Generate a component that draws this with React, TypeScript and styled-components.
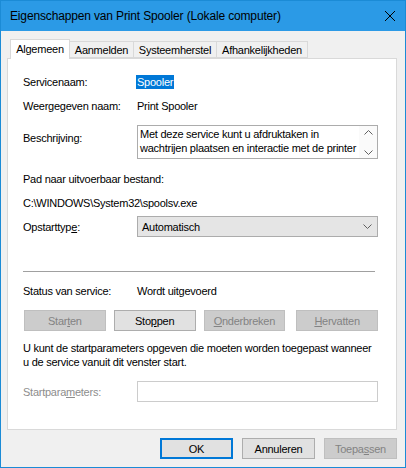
import React from "react";
import styled, { createGlobalStyle } from "styled-components";

const Global = createGlobalStyle`
  html, body { margin: 0; padding: 0; background: #f0f0f0; }
  body {
    font-family: "Liberation Sans", Arial, sans-serif;
    font-size: 11px;
    letter-spacing: -0.25px;
    color: #000;
    white-space: nowrap;
  }
  * { box-sizing: border-box; }
`;

const Window = styled.div`
  width: 406px;
  height: 468px;
  background: #f0f0f0;
  border: 1px solid #1b8bd6;
  display: flex;
  flex-direction: column;
`;

const TitleBar = styled.div`
  height: 30px;
  background: #2b9ae6;
  display: flex;
  align-items: center;
  justify-content: space-between;
  padding: 0 10px 0 9px;
  font-family: "Liberation Sans", Arial, sans-serif;
  font-size: 12px;
  letter-spacing: -0.15px;
  color: #000;
`;

const TabStrip = styled.div`
  display: flex;
  align-items: flex-end;
  height: 27px;
  padding-left: 9px;
  position: relative;
  z-index: 1;
`;

const Tab = styled.div<{ $active?: boolean; $w: number }>`
  width: ${(p) => p.$w}px;
  height: ${(p) => (p.$active ? 20 : 17)}px;
  margin-bottom: ${(p) => (p.$active ? -1 : 0)}px;
  background: ${(p) => (p.$active ? "#fff" : "#f0f0f0")};
  border: 1px solid #d9d9d9;
  border-bottom: ${(p) => (p.$active ? "none" : "1px solid #d9d9d9")};
  margin-left: ${(p) => (p.$active ? 0 : -1)}px;
  display: flex;
  align-items: center;
  justify-content: center;
  padding-bottom: ${(p) => (p.$active ? 2 : 0)}px;
`;

const Panel = styled.div`
  margin: 0 8px 0 6px;
  height: 372px;
  background: #fff;
  border: 1px solid #d9d9d9;
  padding: 0 18px 0 15px;
  display: flex;
  flex-direction: column;
`;

const Row = styled.div<{ $mt: number; $align?: string }>`
  display: grid;
  grid-template-columns: 114px 1fr;
  align-items: ${(p) => p.$align || "center"};
  margin-top: ${(p) => p.$mt}px;
  min-height: 14px;
  line-height: 14px;
`;

const Line = styled.div<{ $mt: number; $disabled?: boolean }>`
  margin-top: ${(p) => p.$mt}px;
  line-height: 14px;
  color: ${(p) => (p.$disabled ? "#8d8d8d" : "#000")};
`;

const Label = styled.span<{ $disabled?: boolean; $pt?: number }>`
  color: ${(p) => (p.$disabled ? "#8d8d8d" : "#000")};
  padding-top: ${(p) => p.$pt || 0}px;
`;

const Selected = styled.span`
  background: #0078d7;
  color: #fff;
  padding: 0 1px;
  margin-left: -1px;
  justify-self: start;
`;

const TextBox = styled.div`
  height: 34px;
  border: 1px solid #acacac;
  display: flex;
  background: #fff;
`;

const TextBoxText = styled.div`
  flex: 1;
  padding: 1px 0 0 2px;
  line-height: 14px;
`;

const ScrollCol = styled.div`
  width: 18px;
  display: flex;
  flex-direction: column;
  justify-content: space-between;
  align-items: center;
  padding: 4px 0 3px;
  background: #fafafa;
`;

const Select = styled.div`
  height: 21px;
  border: 1px solid #acacac;
  background: #e5e5e5;
  display: flex;
  align-items: center;
  justify-content: space-between;
  padding: 0 5px 0 4px;
`;

const Separator = styled.div<{ $mt: number }>`
  margin-top: ${(p) => p.$mt}px;
  height: 1px;
  background: #a0a0a0;
  margin-right: 3px;
`;

const ButtonRow = styled.div<{ $mt: number }>`
  display: flex;
  margin-top: ${(p) => p.$mt}px;
  margin-left: 1px;
`;

const Button = styled.div<{ $disabled?: boolean; $default?: boolean; $w: number; $ml?: number }>`
  width: ${(p) => p.$w}px;
  height: 21px;
  margin-left: ${(p) => p.$ml || 0}px;
  display: flex;
  align-items: center;
  justify-content: center;
  background: ${(p) => (p.$disabled ? "#cccccc" : "#e1e1e1")};
  border: ${(p) => (p.$default ? "2px solid #0078d7" : p.$disabled ? "1px solid #bfbfbf" : "1px solid #adadad")};
  color: ${(p) => (p.$disabled ? "#838383" : "#000")};
`;

const Input = styled.div`
  height: 21px;
  border: 1px solid #cccccc;
  background: #fff;
`;

const Footer = styled.div`
  display: flex;
  justify-content: flex-end;
  padding: 8px 8px 0 0;
  gap: 9px;
`;

const U = styled.span`
  text-decoration: underline;
`;

const Chevron = ({ up, color = "#606060" }: { up?: boolean; color?: string }) => (
  <svg width="9" height="5" viewBox="0 0 9 5">
    <polyline
      points={up ? "0.5,4.5 4.5,0.5 8.5,4.5" : "0.5,0.5 4.5,4.5 8.5,0.5"}
      fill="none"
      stroke={color}
      strokeWidth="1"
    />
  </svg>
);

export default function App() {
  return (
    <>
      <Global />
      <Window>
        <TitleBar>
          <span>Eigenschappen van Print Spooler (Lokale computer)</span>
          <svg width="10" height="10" viewBox="0 0 10 10">
            <path d="M0 0 L10 10 M10 0 L0 10" stroke="#000" strokeWidth="1" />
          </svg>
        </TitleBar>
        <TabStrip>
          <Tab $active $w={60}>Algemeen</Tab>
          <Tab $w={65}>Aanmelden</Tab>
          <Tab $w={84}>Systeemherstel</Tab>
          <Tab $w={92}>Afhankelijkheden</Tab>
        </TabStrip>
        <Panel>
          <Row $mt={16}>
            <Label>Servicenaam:</Label>
            <Selected>Spooler</Selected>
          </Row>
          <Row $mt={10}>
            <Label>Weergegeven naam:</Label>
            <span>Print Spooler</span>
          </Row>
          <Row $mt={12} $align="start">
            <Label $pt={6}>Beschrijving:</Label>
            <TextBox>
              <TextBoxText>
                Met deze service kunt u afdruktaken in
                <br />
                wachtrijen plaatsen en interactie met de printer
              </TextBoxText>
              <ScrollCol>
                <Chevron up />
                <Chevron />
              </ScrollCol>
            </TextBox>
          </Row>
          <Line $mt={13}>Pad naar uitvoerbaar bestand:</Line>
          <Line $mt={10}>C:\WINDOWS\System32\spoolsv.exe</Line>
          <Row $mt={6}>
            <Label>
              Opstarttyp<U>e</U>:
            </Label>
            <Select>
              <span>Automatisch</span>
              <Chevron />
            </Select>
          </Row>
          <Separator $mt={34} />
          <Row $mt={12}>
            <Label>Status van service:</Label>
            <span>Wordt uitgevoerd</span>
          </Row>
          <ButtonRow $mt={12}>
            <Button $disabled $w={82}>
              Star<U>t</U>en
            </Button>
            <Button $w={82} $ml={8}>
              Sto<U>p</U>pen
            </Button>
            <Button $disabled $w={82} $ml={8}>
              <U>O</U>nderbreken
            </Button>
            <Button $disabled $w={82} $ml={11}>
              <U>H</U>ervatten
            </Button>
          </ButtonRow>
          <Line $mt={10}>
            U kunt de startparameters opgeven die moeten worden toegepast wanneer
            <br />u de service vanuit dit venster start.
          </Line>
          <Row $mt={12}>
            <Label $disabled>
              Startpara<U>m</U>eters:
            </Label>
            <Input />
          </Row>
        </Panel>
        <Footer>
          <Button $default $w={73}>OK</Button>
          <Button $w={73}>Annuleren</Button>
          <Button $disabled $w={73}>
            Toepa<U>s</U>sen
          </Button>
        </Footer>
      </Window>
    </>
  );
}
